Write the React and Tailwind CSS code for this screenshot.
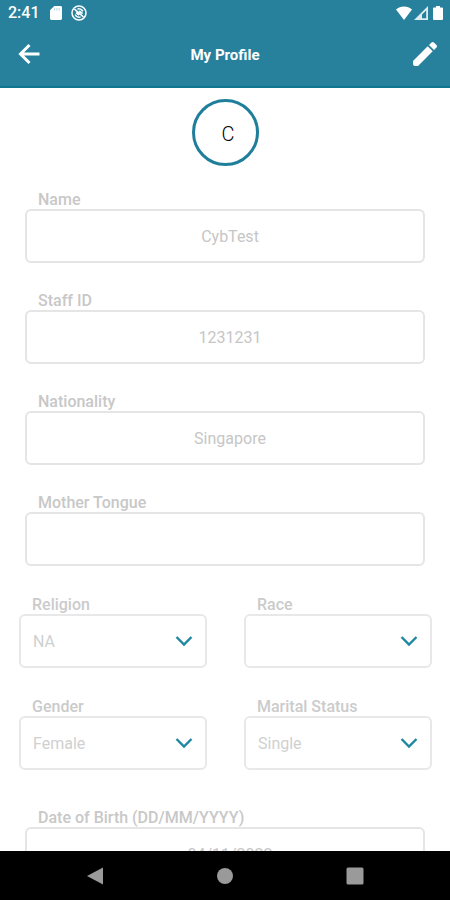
const FullField = ({ id, label, value }) => {
  return (
    <div className="px-[25px]">
      <label
        htmlFor={id}
        className="block h-5 pl-[13px] text-base leading-[22px] font-medium text-[#c8c8c8]"
      >
        {label}
      </label>
      <input
        id={id}
        type="text"
        defaultValue={value}
        readOnly
        className="block w-full h-[54px] pl-[18px] pr-2 rounded-md border-2 border-[#e5e5e5] bg-white text-center text-base text-[#c6c6c6] outline-none"
      />
    </div>
  );
};

const SelectField = ({ id, label, value }) => {
  return (
    <div>
      <label
        htmlFor={id}
        className="block h-5 pl-[13px] text-base leading-[22px] font-medium text-[#cbcbcb]"
      >
        {label}
      </label>
      <div className="relative">
        <select
          id={id}
          defaultValue={value}
          className="block w-full h-[54px] pl-3 pr-10 pt-0.5 appearance-none rounded-md border-2 border-[#e8e8e8] bg-white text-base text-[#d0d0d0] outline-none"
        >
          <option value={value}>{value}</option>
        </select>
        <svg
          viewBox="0 0 18 12"
          className="absolute right-3.5 top-1/2 -translate-y-1/2 w-[18px] h-3 pointer-events-none"
          fill="none"
          stroke="#1f87a3"
          strokeWidth="2.4"
        >
          <path d="M1.5 2 L9 9.5 L16.5 2" />
        </svg>
      </div>
    </div>
  );
};

const StatusBar = () => {
  return (
    <div className="flex items-center justify-between h-[26px] pl-2 pr-[7px] text-white">
      <div className="flex items-center">
        <span className="w-[41px] text-base leading-5 font-medium">2:41</span>
        {/* SD card */}
        <svg viewBox="0 0 12 14" className="w-3 h-3.5 ml-px" fill="currentColor">
          <path d="M4.3 0H10.6Q12 0 12 1.4V12.6Q12 14 10.6 14H1.4Q0 14 0 12.6V4.3Z" />
          <path d="M4 2h1.2v2.5H4zM6.3 2h1.2v2.5H6.3zM8.6 2h1.2v2.5H8.6z" fill="#c3dbe4" />
        </svg>
        <svg
          viewBox="0 0 16 16"
          className="w-4 h-4 ml-[9px]"
          fill="none"
          stroke="currentColor"
          strokeWidth="1.5"
        >
          <circle cx="8" cy="8" r="7" />
          <path d="M4.2 9.6A4.2 4.2 0 0 0 9.6 11.9M11.8 6.4A4.2 4.2 0 0 0 6.4 4.1" />
          <path d="M3.5 4.2L12.5 12M5 7.6L8.2 10M8.2 6L11.6 8.6" strokeWidth="1.6" />
        </svg>
      </div>
      <div className="flex items-center">
        <svg viewBox="0 0 16 14" className="w-4 h-3.5" fill="currentColor">
          <path d="M8 14L0 3.6Q3.4 0.4 8 0.4T16 3.6Z" />
        </svg>
        <svg
          viewBox="0 0 14 14"
          className="w-3.5 h-3.5 ml-0.5"
          fill="currentColor"
          fillRule="evenodd"
        >
          <path d="M14 0V14H0ZM12.2 4.4L8 8.6V12.2H12.2Z" fillOpacity="0.85" />
        </svg>
        <svg viewBox="0 0 10 14" className="w-2.5 h-3.5 ml-[5px]" fill="currentColor">
          <path d="M3 0H7V1.4H9Q10 1.4 10 2.4V13Q10 14 9 14H1Q0 14 0 13V2.4Q0 1.4 1 1.4H3Z" />
        </svg>
      </div>
    </div>
  );
};

const App = () => {
  return (
    <div className="flex flex-col h-screen bg-white font-['Roboto',sans-serif]">
      <header className="shrink-0 bg-[#27819d] border-b-2 border-[#107590]">
        <StatusBar />
        <div className="flex items-center justify-between h-[60px] px-3 pb-1 text-white">
          <button type="button" aria-label="Back" className="flex justify-end w-[29px]">
            <svg
              viewBox="0 0 24 24"
              className="w-6 h-6"
              fill="none"
              stroke="currentColor"
              strokeWidth="3"
            >
              <path d="M22.5 12H3.5M12.5 3L3.5 12L12.5 21" />
            </svg>
          </button>
          <h1 className="pt-0.5 text-[15px] font-bold">My Profile</h1>
          <button type="button" aria-label="Edit profile" className="flex justify-end w-[29px]">
            <svg viewBox="0 0 26 26" className="w-[26px] h-[26px]" fill="currentColor">
              <path d="M1 20L15.7 5.3L20.7 10.3L6 25H3Q1 25 1 23Z" />
              <path d="M17 4L19.5 1.5Q20.7 0.4 21.9 1.5L24.5 4.1Q25.6 5.3 24.5 6.5L22 9Z" />
            </svg>
          </button>
        </div>
      </header>

      <main className="flex-1 min-h-0 overflow-hidden">
        <div className="flex items-center justify-center w-[67px] h-[67px] mx-auto mt-[11px] mb-[23px] pl-1.5 pt-0.5 rounded-full border-3 border-[#1f7f9b] text-xl font-light text-black">
          C
        </div>

        <div className="flex flex-col gap-[27px]">
          <FullField id="name" label="Name" value="CybTest" />
          <FullField id="staff-id" label="Staff ID" value="1231231" />
          <FullField id="nationality" label="Nationality" value="Singapore" />
          <FullField id="mother-tongue" label="Mother Tongue" value="" />
        </div>

        <div className="grid grid-cols-2 gap-x-[37px] gap-y-7 pl-[19px] pr-[18px] pt-7 pb-[37px]">
          <SelectField id="religion" label="Religion" value="NA" />
          <SelectField id="race" label="Race" value="" />
          <SelectField id="gender" label="Gender" value="Female" />
          <SelectField id="marital" label="Marital Status" value="Single" />
        </div>

        <FullField id="dob" label="Date of Birth (DD/MM/YYYY)" value="04/11/2022" />
      </main>

      {/* Android navigation */}
      <nav className="shrink-0 flex items-center justify-center gap-[112px] h-[49px] bg-black text-[#9a9a9a]">
        <button type="button" aria-label="System back">
          <svg viewBox="0 0 18 18" className="w-[18px] h-[18px]" fill="currentColor">
            <path d="M17 0.5V17.5L1 9Z" />
          </svg>
        </button>
        <button type="button" aria-label="Home">
          <svg viewBox="0 0 18 18" className="w-[18px] h-[18px]" fill="currentColor">
            <circle cx="9" cy="9" r="8" />
          </svg>
        </button>
        <button type="button" aria-label="Recent apps">
          <svg viewBox="0 0 18 18" className="w-[18px] h-[18px]" fill="currentColor">
            <rect x="0.5" y="0.5" width="17" height="17" rx="1.5" />
          </svg>
        </button>
      </nav>
    </div>
  );
};

export default App;
